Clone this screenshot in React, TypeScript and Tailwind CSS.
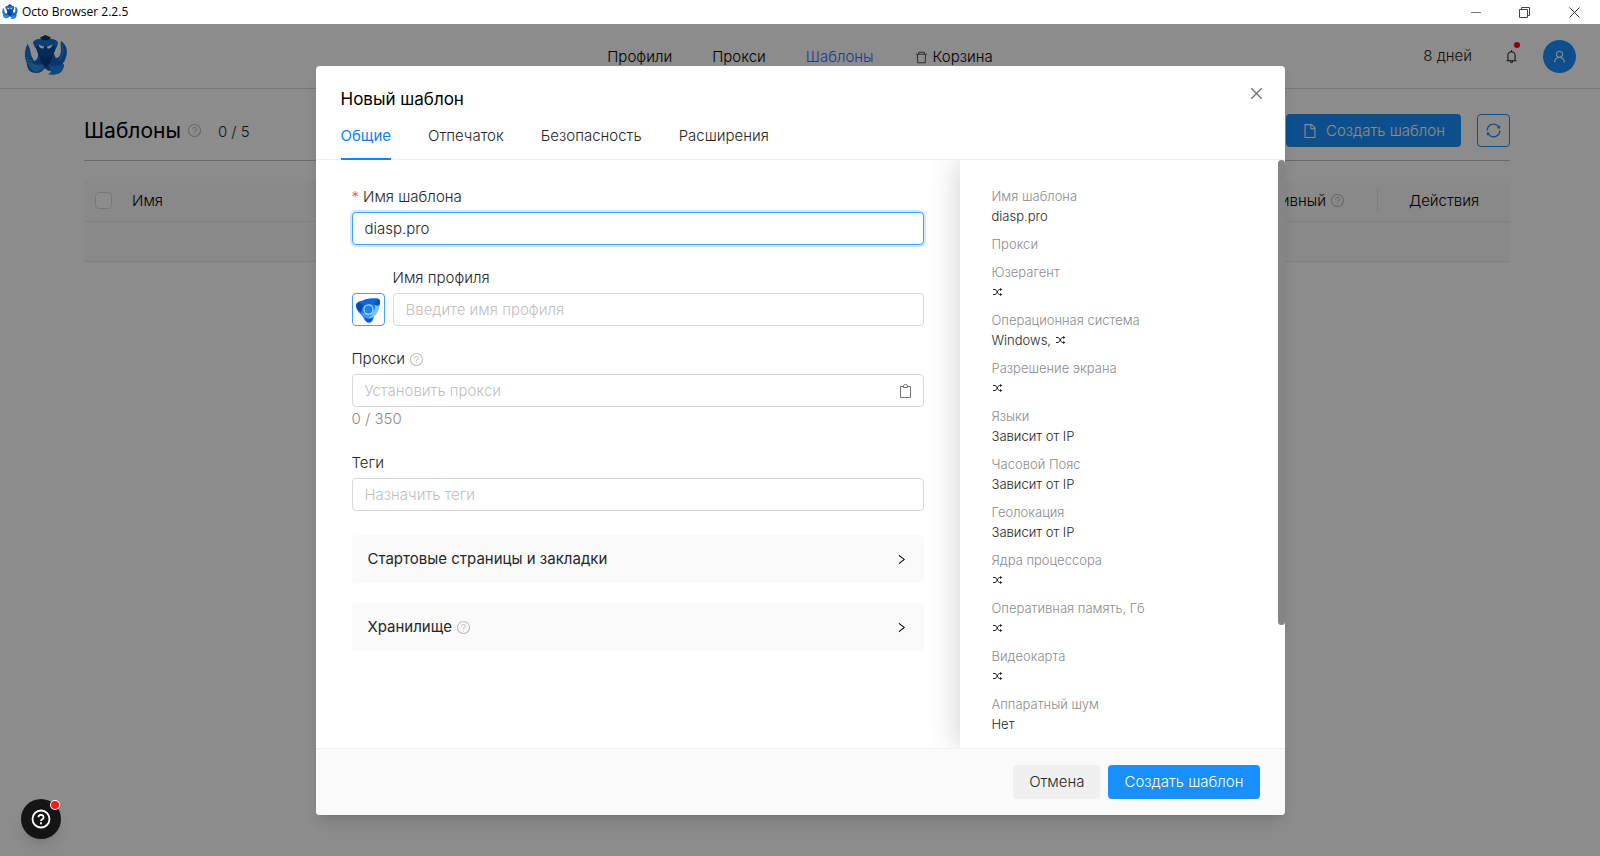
import { useState } from 'react';
import clsx from 'clsx';
import {
  AiOutlineBell,
  AiOutlineClose,
  AiOutlineDelete,
  AiOutlineFile,
  AiOutlineQuestionCircle,
  AiOutlineRight,
  AiOutlineSync,
  AiOutlineUser,
} from 'react-icons/ai';

interface SummaryItem {
  label: string;
  value?: string;
  random?: boolean;
}

const TABS = ['Общие', 'Отпечаток', 'Безопасность', 'Расширения'];

const SUMMARY: SummaryItem[] = [
  { label: 'Прокси' },
  { label: 'Юзерагент', random: true },
  { label: 'Операционная система', value: 'Windows,', random: true },
  { label: 'Разрешение экрана', random: true },
  { label: 'Языки', value: 'Зависит от IP' },
  { label: 'Часовой Пояс', value: 'Зависит от IP' },
  { label: 'Геолокация', value: 'Зависит от IP' },
  { label: 'Ядра процессора', random: true },
  { label: 'Оперативная память, Гб', random: true },
  { label: 'Видеокарта', random: true },
  { label: 'Аппаратный шум', value: 'Нет' },
];

const inputClass =
  'block h-[33px] w-full rounded border bg-white px-3 text-[15px] font-light outline-none placeholder:text-[#bfbfbf]';
const inputIdle = 'border-[#d9d9d9]';
const inputActive = 'border-[#40a0ff] ring-2 ring-[#1890ff]/20';

export default function App() {
  return (
    <div className="flex h-screen flex-col overflow-hidden bg-white font-['Inter',sans-serif] text-[15px] leading-6 font-light text-[#262626]">
      <TitleBar />
      <div className="relative flex-1">
        <TopNav />
        <TemplatesPage />
        <div className="absolute inset-0 flex justify-center bg-black/45 px-4 pt-[42px] pb-[41px]">
          <TemplateDialog />
        </div>
        <HelpButton />
      </div>
    </div>
  );
}

function TitleBar() {
  return (
    <div className="flex h-6 flex-none items-center pl-[2px] font-['Open_Sans',sans-serif] text-xs font-normal text-black">
      <OctoLogo className="mr-1 h-4 w-4" />
      <span>Octo Browser 2.2.5</span>
      <div className="ml-auto flex">
        <button aria-label="Свернуть" className="flex h-6 w-12 items-center justify-center">
          <svg viewBox="0 0 10 10" className="h-[10px] w-[10px]"><path d="M0 5.5h10" stroke="#777" /></svg>
        </button>
        <button aria-label="Развернуть" className="flex h-6 w-12 items-center justify-center">
          <svg viewBox="0 0 11 11" className="h-[11px] w-[11px]" fill="none" stroke="#444">
            <path d="M.5 2.5h8v8h-8zM2.5 2.5v-2h8v8h-2" />
          </svg>
        </button>
        <button aria-label="Закрыть" className="flex h-6 w-[52px] items-center justify-center">
          <svg viewBox="0 0 11 11" className="h-[11px] w-[11px]"><path d="M.5.5l10 10M10.5.5l-10 10" stroke="#333" /></svg>
        </button>
      </div>
    </div>
  );
}

function TopNav() {
  return (
    <header className="relative flex h-[65px] items-center justify-end border-b border-[#d9d9d9] px-6">
      <a href="#home" aria-label="Octo Browser" className="mr-auto">
        <OctoLogo className="h-11 w-11" />
      </a>
      <nav className="absolute inset-x-0 top-[21px] mx-auto flex h-6 w-fit gap-10 text-black">
        <a href="#profiles">Профили</a>
        <a href="#proxies">Прокси</a>
        <a href="#templates" className="text-[#2f6fff]">Шаблоны</a>
        <a href="#trash" className="flex items-center gap-1">
          <AiOutlineDelete size={15} className="text-[#595959]" />
          Корзина
        </a>
      </nav>
      <div className="relative flex items-center">
        <span className="mr-8">8 дней</span>
        <button aria-label="Уведомления" className="relative mr-6">
          <AiOutlineBell size={15} />
          <span className="absolute -top-[7px] -right-px h-[6px] w-[6px] rounded-full bg-[#ff0018]" />
        </button>
        <button aria-label="Аккаунт" className="flex h-[33px] w-[33px] items-center justify-center rounded-full bg-[#1890ff] text-white">
          <AiOutlineUser size={15} />
        </button>
      </div>
    </header>
  );
}

function TemplatesPage() {
  return (
    <main className="pt-[25px] pr-[90px] pl-[84px]">
      <div className="flex h-[47px] items-start border-b border-[#bfbfbf]">
        <h1 className="text-[21px] leading-[34px] font-normal text-black">Шаблоны</h1>
        <QuestionIcon className="mt-[9px] ml-[6px]" />
        <span className="mt-[6px] ml-4">0 / 5</span>
        <button className="ml-auto flex h-[33px] items-center gap-2 rounded bg-[#1890ff] px-4 text-white">
          <AiOutlineFile size={16} />
          Создать шаблон
        </button>
        <button aria-label="Обновить" className="ml-4 flex h-[33px] w-[33px] items-center justify-center rounded border border-[#1890ff] text-[#1890ff]">
          <AiOutlineSync size={17} />
        </button>
      </div>
      <table className="mt-5 w-full bg-[#fafafa]">
        <thead>
          <tr className="h-10 border-b border-[#e8e8e8] text-left text-black">
            <th className="w-12 pl-[11px]">
              <input type="checkbox" aria-label="Выбрать все" className="block h-[17px] w-[17px] appearance-none rounded border border-[#d9d9d9] bg-white" />
            </th>
            <th className="font-light">Имя</th>
            <th className="font-light">
              <span className="flex items-center justify-end gap-1 pr-8">
                Последний активный
                <QuestionIcon />
              </span>
            </th>
            <th className="w-[133px] font-light">
              <span className="block border-l border-[#e8e8e8] text-center">Действия</span>
            </th>
          </tr>
        </thead>
        <tbody>
          <tr className="h-10 border-b border-[#e8e8e8]">
            <td colSpan={4} />
          </tr>
        </tbody>
      </table>
    </main>
  );
}

function TemplateDialog() {
  const [tab, setTab] = useState(TABS[0]);
  const [name, setName] = useState('diasp.pro');

  return (
    <section
      role="dialog"
      aria-labelledby="dialog-title"
      className="flex h-full w-full max-w-[969px] flex-col overflow-hidden rounded bg-white shadow-lg"
    >
      <div className="flex flex-none items-start justify-between pt-[21px] pr-5 pl-[25px]">
        <h2 id="dialog-title" className="text-[17px] font-normal text-black">Новый шаблон</h2>
        <button aria-label="Закрыть окно" className="flex h-3 items-center text-[#737373]">
          <AiOutlineClose size={17} />
        </button>
      </div>
      <div role="tablist" className="flex flex-none gap-[37px] border-b border-[#f0f0f0] px-[25px]">
        {TABS.map(t => (
          <button
            key={t}
            role="tab"
            aria-selected={t === tab}
            onClick={() => setTab(t)}
            className={clsx(
              '-mb-px h-[49px] border-b-2 pt-[2px]',
              t === tab ? 'border-[#0a84ff] font-normal text-[#0a84ff]' : 'border-transparent',
            )}
          >
            {t}
          </button>
        ))}
      </div>

      <div className="flex min-h-0 flex-1 overflow-hidden">
        <form className="flex-1 px-9 pt-[25px]">
          <div className="mb-[21px] flex flex-col gap-[3px]">
            <label htmlFor="template-name">
              <span className="mr-1 text-[#ff4d4f]">*</span>
              Имя шаблона
            </label>
            <input
              id="template-name"
              value={name}
              onChange={e => setName(e.target.value)}
              className={clsx(inputClass, inputActive)}
            />
          </div>

          <div className="mb-[21px] flex items-end gap-2">
            <button type="button" aria-label="Иконка профиля" className="flex h-[33px] w-[33px] flex-none items-center justify-center rounded border border-[#40a0ff]">
              <ProfileIcon />
            </button>
            <div className="flex flex-1 flex-col gap-[3px]">
              <label htmlFor="profile-name">Имя профиля</label>
              <input id="profile-name" placeholder="Введите имя профиля" className={clsx(inputClass, inputIdle)} />
            </div>
          </div>

          <div className="mb-5">
            <div className="mb-[3px] flex items-center gap-1">
              <label htmlFor="proxy">Прокси</label>
              <QuestionIcon />
            </div>
            <div className="relative">
              <input id="proxy" placeholder="Установить прокси" className={clsx(inputClass, inputIdle)} />
              <button type="button" aria-label="Вставить" className="absolute inset-y-0 right-3">
                <ClipboardIcon />
              </button>
            </div>
            <div className="text-[#8c8c8c]">0 / 350</div>
          </div>

          <div className="mb-6 flex flex-col gap-[3px]">
            <label htmlFor="tags">Теги</label>
            <input id="tags" placeholder="Назначить теги" className={clsx(inputClass, inputIdle)} />
          </div>

          <div className="flex flex-col gap-5">
            <Section title="Стартовые страницы и закладки" />
            <Section title="Хранилище" hint />
          </div>
        </form>

        <aside className="relative w-[325px] flex-none bg-white px-8 pt-[26px] text-[13px] leading-5 shadow-[0_0_30px_rgba(0,0,0,0.2)]">
          <dl className="flex flex-col gap-2">
            <SummaryRow label="Имя шаблона" value={name} />
            {SUMMARY.map(item => (
              <SummaryRow key={item.label} {...item} />
            ))}
          </dl>
          {/* scroll thumb */}
          <div className="absolute top-0 right-0 h-[79%] w-[7px] rounded-full bg-[#858585]" />
        </aside>
      </div>

      <div className="relative flex flex-none justify-end gap-2 border-t border-[#f0f0f0] bg-[#fafafa] px-[25px] py-4">
        <button className="h-[34px] rounded bg-[#f0f0f0] px-4">Отмена</button>
        <button className="h-[34px] rounded bg-[#1890ff] px-4 text-white">Создать шаблон</button>
      </div>
    </section>
  );
}

function SummaryRow({ label, value, random }: SummaryItem) {
  return (
    <div>
      <dt className="text-[#8c8c8c]">{label}</dt>
      {(value || random) && (
        <dd className="flex h-5 items-center gap-1">
          {value}
          {random && <ShuffleIcon />}
        </dd>
      )}
    </div>
  );
}

function Section({ title, hint }: { title: string; hint?: boolean }) {
  return (
    <button type="button" className="flex h-12 w-full items-center gap-1 rounded bg-[#fafafa] px-4 text-left font-normal">
      {title}
      {hint && <QuestionIcon />}
      <AiOutlineRight size={13} className="ml-auto text-black" />
    </button>
  );
}

function HelpButton() {
  return (
    <button aria-label="Помощь" className="absolute bottom-[17px] left-[21px] flex h-10 w-10 items-center justify-center rounded-full bg-[#141414] shadow-lg">
      <svg viewBox="0 0 20 20" className="h-5 w-5" fill="none" stroke="#fff" strokeWidth="1.8">
        <circle cx="10" cy="10" r="8.5" />
        <path d="M7.4 8.2a2.6 2.4 0 1 1 3.9 2.1c-.9.5-1.3.9-1.3 1.7" />
        <path d="M10 13.3v1.9" />
      </svg>
      <span className="absolute top-[2px] right-[2px] h-2 w-2 rounded-full bg-[#ff1a1a] ring-1 ring-white" />
    </button>
  );
}

function QuestionIcon({ className }: { className?: string }) {
  return <AiOutlineQuestionCircle size={15} className={clsx('flex-none text-[#bfbfbf]', className)} />;
}

function ShuffleIcon() {
  return (
    <svg viewBox="0 0 11 8" className="h-2 w-[11px]" fill="none" stroke="#262626">
      <path d="M1 1.5h2c2 0 2.5 5 4.5 5H9M1 6.5h2c2 0 2.5-5 4.5-5H9" />
      <path d="M8 0l2.5 1.5L8 3zM8 5l2.5 1.5L8 8z" fill="#262626" stroke="none" />
    </svg>
  );
}

function ClipboardIcon() {
  return (
    <svg viewBox="0 0 13 14" className="h-[14px] w-[13px]" fill="none" stroke="#737373">
      <path d="M4 2.5H1.5v11h10v-11H9" />
      <path d="M4.5 3.5V2a2 1.500 0 0 1 4 0v1.5z" />
    </svg>
  );
}

function ProfileIcon() {
  return (
    <svg viewBox="0 0 26 26" className="h-[26px] w-[26px]">
      <path d="M1 9c0-3 2-4.5 6-5 4-2.500 9-2.500 14-2.500 3.500 0 4.500 2 4 5-.5 3-2 5-4 8-2 3-2 8-4 10-2 2-5 1.500-7-1-1-1.500-2-4-4-6C3 15 1 12 1 9z" fill="#1b7de8" />
      <path d="M7 4c4-2.500 9-2.500 14-2.500 3.500 0 4.500 2 4 5-.5 1.500-2 2.500-4 2-3-2-9-2-13 1-2 2-3 4-2 6C3 13 0 10 1.500 7 2.500 5 4.500 4.300 7 4z" fill="#0f66d8" />
      <path d="M2 6.500c2-1 5 0 6 2l-2 7C2.500 13 .5 10 2 6.500z" fill="#0848a8" />
      <path d="M21 2c4 0 4.500 3 3 6-2 1.500-3 1-5-.5 1-1.500 2-3 2-5.500z" fill="#0a52b8" />
      <path d="M24.500 8c0 6-4.500 12-9 14-4 0-7-2.500-9-6.500 4 2 8 2 11 0 3-2.500 3-5 2-8 2 1.500 4 1.500 5 .5z" fill="#7cc4ff" />
      <path d="M6.500 15.500c4 2.500 8 2.500 11 .5-.5 2-2 4-4 5-3 0-5-2-7-5.500z" fill="#3b9cf8" />
      <path d="M9.500 20c3 2 5.500 2 8 .5-.5 2.500-1.500 4.500-3.500 5-2.500 0-3.500-2-4.500-5.500z" fill="#0d56c0" />
      <circle cx="13.5" cy="12.5" r="5.200" fill="#a6d6ff" />
      <circle cx="13.5" cy="12.5" r="3.900" fill="#1585f5" />
    </svg>
  );
}

function OctoLogo({ className }: { className?: string }) {
  return (
    <svg viewBox="0 0 44 44" className={className}>
      {/* outer tentacles, tips up */}
      <path d="M3.500 10C1 15 0 21 2 27c2 7 6 11 12 11l5-9c-5 1-9-1-11-6-2-4-1-8-4.500-13z" fill="#1873d2" />
      <path d="M37 7c-1 6 1 10-1 14-1 3-4 4-8 2l-2 7c5 5 12 2 15-4 3-7 3-14-4-19z" fill="#156bc8" />
      <path d="M38 10c2 6 1 12-3 16" fill="none" stroke="#3f9df2" />
      {/* body and lower tentacles */}
      <path d="M14 19h16c1 5 3 7 7 8l3 4c0 5-4 8-9 9H25c2-1 2-2 2-3-3 0-5-1-6-3-2 3-5 5-9 5-6 0-9-4-9-9 3-1 6-1 9-4 2-2 2-4 2-7z" fill="#1262bc" />
      <path d="M26 31c4 1 9 1 13-1 1 5-1 9-6 10-3 1-6 1-9 .5 2-1 3.500-2 3.500-4.500-2-1-2-3-1.500-5z" fill="#1d84e8" />
      <path d="M4 28c4 0 6 3 10 3 3 0 5-1 7-2 0 5-4 9-9 9-4-1-7-4-8-10z" fill="#2887e4" />
      <path d="M15 20h14l-2 7-5 7-5-6z" fill="#083c88" />
      {/* head */}
      <path d="M9.500 8C12 4.500 16 5 21 4.500c5 .5 10 0 12.500 3.500 1 3-2 6-2.500 9-2 4-5 6-9 7-5-1-8-3-9-7-1-4-4-6-3.500-9z" fill="#0b4ea4" />
      <path d="M9.500 8C12 4.500 16 5 21 4.500c5 .5 10 0 12.500 3.500.5 2-1 4-2 6l-2-3c-3-.5-6 0-8 2-2-2-5-2.500-8-2l-2 3c-1-2-2.500-4-2-6z" fill="#1b74d0" />
      <path d="M16 3.500L21.500 1 27 3.500c-1 2-3 3-5.500 3S17 5.500 16 3.500z" fill="#083878" />
      <path d="M14.500 10.500l5.500 2-.5 2c-2.500.5-4.500-1-5-4zM28.500 10.500l-5.500 2 .5 2c2.500.5 4.500-1 5-4z" fill="#fff" />
      {/* suckers */}
      <path d="M3 23c1 7 5 12 11 14M6 26c2 5 5 7 10 7.500" fill="none" stroke="#7cbcfa" strokeDasharray="1.200 1.500" />
    </svg>
  );
}
